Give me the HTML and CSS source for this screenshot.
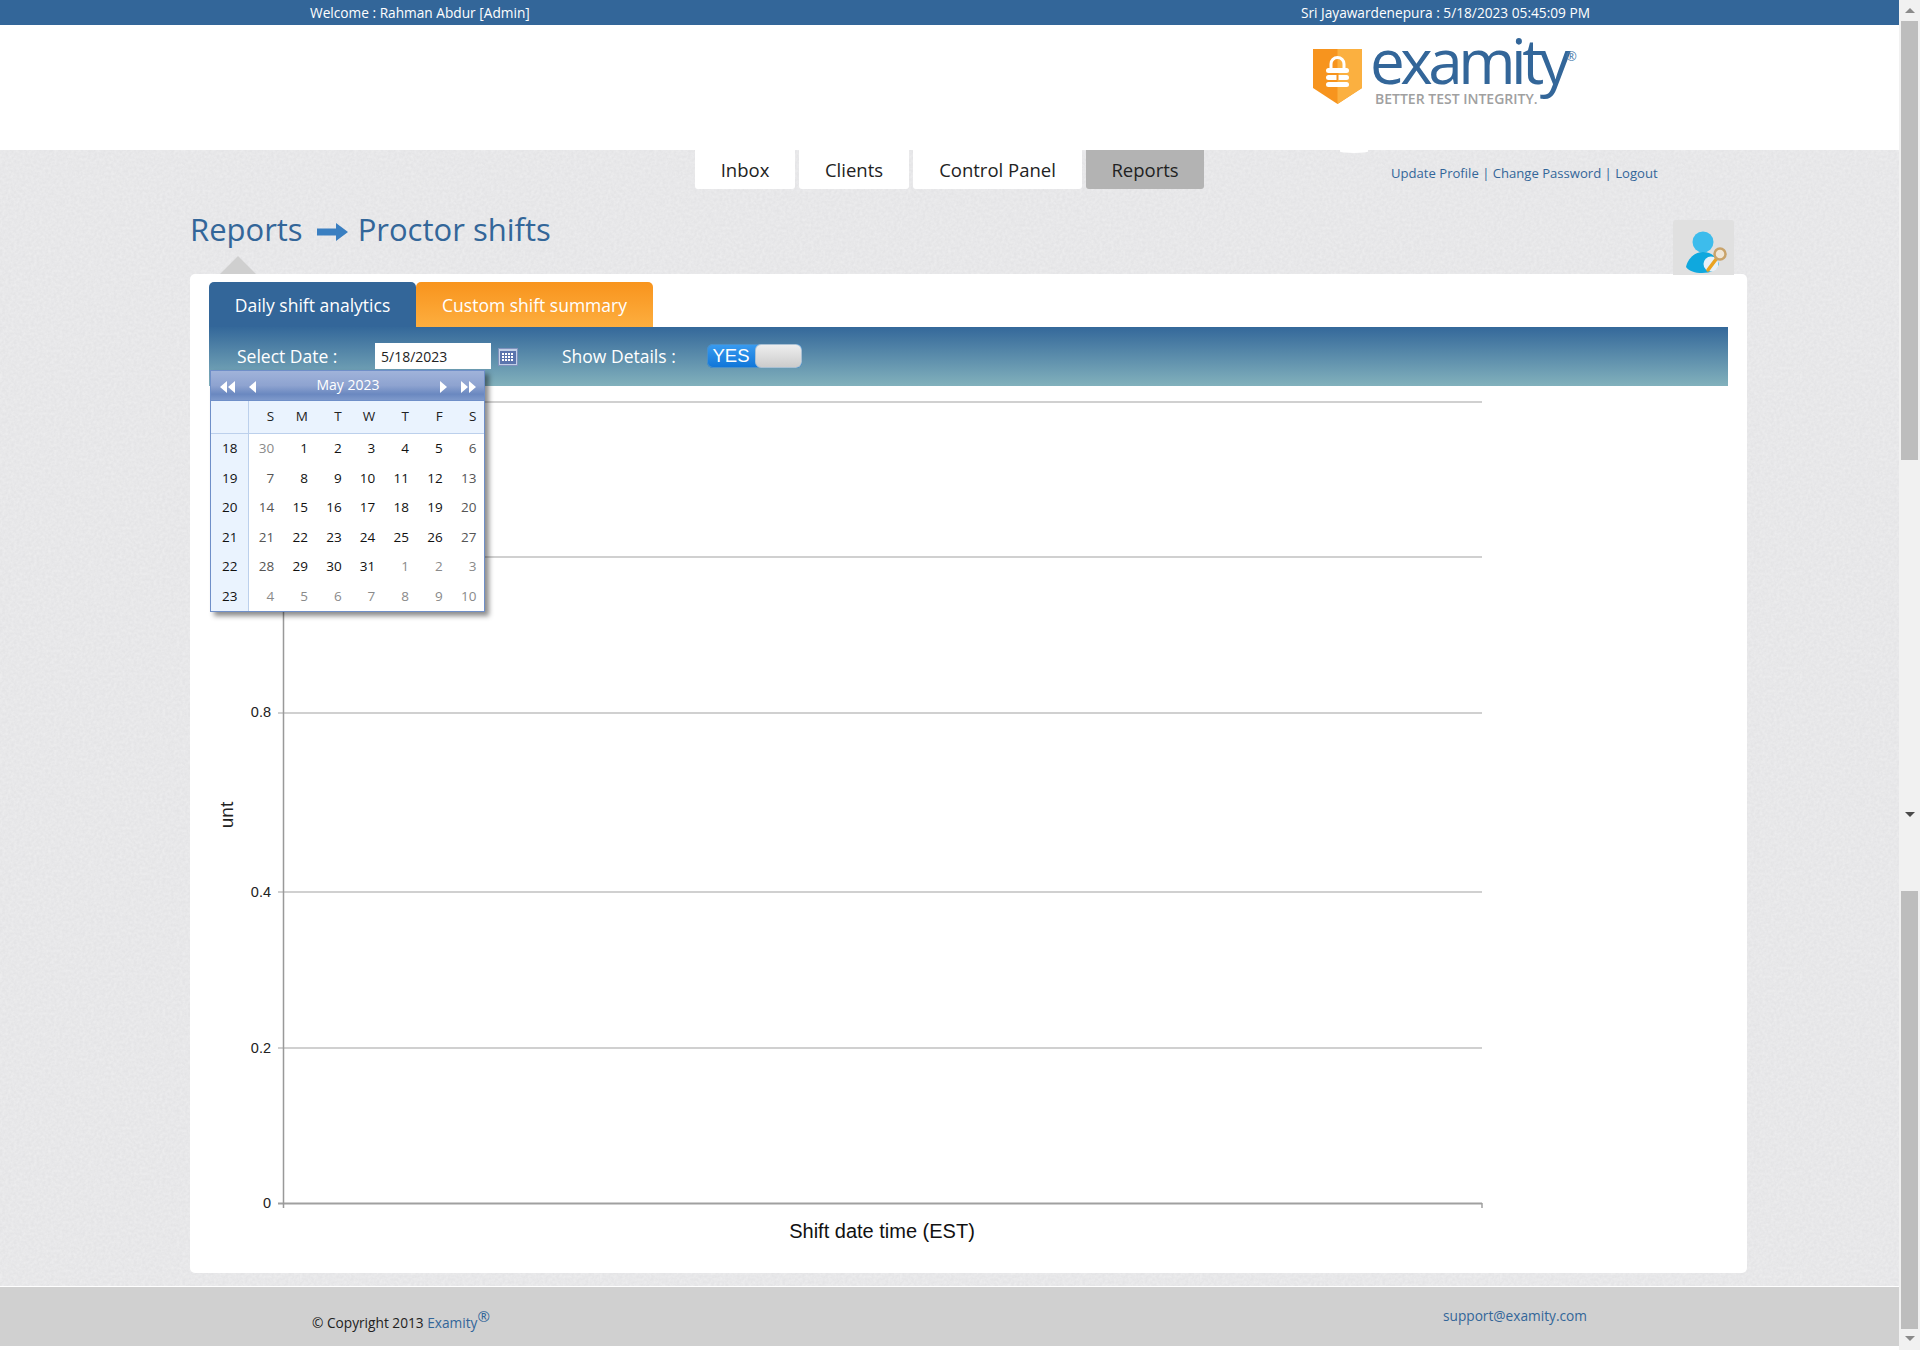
FILE: index.html
```html
<!DOCTYPE html>
<html lang="en">
<head>
  <meta charset="UTF-8" />
  <title>Examity - Proctor shifts</title>
  <link rel="stylesheet" href="styles.css">
</head>
<body>
<div class="window">
  <div class="page">
    <!-- Top strip -->
    <div class="topbar">
      <span>Welcome : Rahman Abdur [Admin]</span>
      <span>Sri Jayawardenepura : 5/18/2023 05:45:09 PM</span>
    </div>

    <!-- Logo -->
    <div class="header">
      <div class="logo">
        <svg class="shield" width="49" height="55" viewBox="0 0 49 55">
          <path d="M0 0H49V39L24.500 55L0 39Z" fill="#f7941e"/>
          <path d="M24.500 0H49V39L24.500 55Z" fill="#fbb040"/>
          <path d="M18 20V15a6.500 6.500 0 0 1 13 0V20" fill="none" stroke="#fff" stroke-width="3"/>
          <rect x="13" y="19" width="23" height="5" rx="2.500" fill="#fff"/>
          <rect x="13" y="26" width="23" height="5" rx="2.500" fill="#fff"/>
          <rect x="13" y="33" width="23" height="5" rx="2.500" fill="#fff"/>
          <rect x="23.500" y="24" width="2" height="7" fill="#f7941e"/>
        </svg>
        <div class="logo-text">
          <div class="logo-name">examity<span class="logo-reg">®</span></div>
          <div class="logo-tag">BETTER TEST INTEGRITY.</div>
        </div>
      </div>
    </div>

    <div class="content">
      <!-- Main nav -->
      <div class="navrow">
        <a class="navtab tab-inbox">Inbox</a>
        <a class="navtab tab-clients">Clients</a>
        <a class="navtab tab-control">Control Panel</a>
        <a class="navtab tab-reports active">Reports</a>
        <div class="bump"></div>
        <div class="userlinks">
          <a>Update Profile</a> | <a>Change Password</a> | <a>Logout</a>
        </div>
      </div>

      <!-- Title -->
      <div class="titlerow">
        <h1 class="title">Reports</h1>
        <svg class="title-arrow" width="31" height="18" viewBox="0 0 31 18">
          <path d="M0 5.500H19V0L31 9L19 18V12.500H0Z" fill="#3a7fc1"/>
        </svg>
        <h1 class="title">Proctor shifts</h1>
        <div class="pointer"></div>
        <div class="usericon">
          <svg width="61" height="55" viewBox="0 0 61 55">
            <circle cx="30" cy="22" r="10.500" fill="#3dbcec"/>
            <path d="M13 47C15 38 22 32 30 32C38 32 44 37 46 44C44 50 38 53 29 53C22 53 16 51 13 47Z" fill="#0fa8de"/>
            <circle cx="38" cy="44" r="7.500" fill="#e6f1f8"/>
            <path d="M35 50L44 38" stroke="#e9a422" stroke-width="3.500" stroke-linecap="round"/>
            <circle cx="47" cy="34" r="5.500" fill="#f0e6d6" stroke="#c9a36a" stroke-width="2.500"/>
          </svg>
        </div>
      </div>

      <!-- Card -->
      <div class="card">
        <div class="tabs">
          <div class="tab tab-daily">Daily shift analytics</div>
          <div class="tab tab-custom">Custom shift summary</div>
        </div>
        <div class="filterbar">
          <label class="flabel flabel-date">Select Date :</label>
          <input class="dateinput" type="text" value="5/18/2023">
          <svg class="calicon" width="20" height="18" viewBox="0 0 20 18">
            <rect x="0.500" y="0.500" width="19" height="17" fill="#c3cfe6" stroke="#7f92bd"/>
            <rect x="2" y="3" width="16" height="13" fill="#5b74ad"/>
            <g fill="#fff">
              <rect x="4" y="5" width="2" height="2"/><rect x="7" y="5" width="2" height="2"/><rect x="10" y="5" width="2" height="2"/><rect x="13" y="5" width="2" height="2"/>
              <rect x="4" y="8" width="2" height="2"/><rect x="7" y="8" width="2" height="2"/><rect x="10" y="8" width="2" height="2"/><rect x="13" y="8" width="2" height="2"/>
              <rect x="4" y="11" width="2" height="2"/><rect x="7" y="11" width="2" height="2"/><rect x="10" y="11" width="2" height="2"/><rect x="13" y="11" width="2" height="2"/>
            </g>
          </svg>
          <label class="flabel flabel-details">Show Details :</label>
          <div class="toggle">
            <span class="toggle-yes">YES</span>
            <span class="toggle-knob"></span>
          </div>
        </div>

        <!-- Date popup -->
        <div class="calendar">
          <div class="cal-head">
            <svg class="cal-nav" width="16" height="12" viewBox="0 0 16 12"><path d="M7 0V12L0 6ZM15 0V12L8 6Z" fill="#fff"/></svg>
            <svg class="cal-nav cal-prev" width="8" height="12" viewBox="0 0 8 12"><path d="M7 0V12L0 6Z" fill="#fff"/></svg>
            <span class="cal-month">May 2023</span>
            <svg class="cal-nav cal-next" width="8" height="12" viewBox="0 0 8 12"><path d="M1 0V12L8 6Z" fill="#fff"/></svg>
            <svg class="cal-nav" width="16" height="12" viewBox="0 0 16 12"><path d="M1 0V12L8 6ZM9 0V12L16 6Z" fill="#fff"/></svg>
          </div>
          <table class="cal-table">
            <thead>
              <tr><th class="wk"></th><th>S</th><th>M</th><th>T</th><th>W</th><th>T</th><th>F</th><th>S</th></tr>
            </thead>
            <tbody>
              <tr><td class="wk">18</td><td class="om">30</td><td>1</td><td>2</td><td>3</td><td>4</td><td>5</td><td class="we">6</td></tr>
              <tr><td class="wk">19</td><td class="we">7</td><td>8</td><td>9</td><td>10</td><td>11</td><td>12</td><td class="we">13</td></tr>
              <tr><td class="wk">20</td><td class="we">14</td><td>15</td><td>16</td><td>17</td><td>18</td><td>19</td><td class="we">20</td></tr>
              <tr><td class="wk">21</td><td class="we">21</td><td>22</td><td>23</td><td>24</td><td>25</td><td>26</td><td class="we">27</td></tr>
              <tr><td class="wk">22</td><td class="we">28</td><td>29</td><td>30</td><td>31</td><td class="om">1</td><td class="om">2</td><td class="om">3</td></tr>
              <tr><td class="wk">23</td><td class="om">4</td><td class="om">5</td><td class="om">6</td><td class="om">7</td><td class="om">8</td><td class="om">9</td><td class="om">10</td></tr>
            </tbody>
          </table>
        </div>

        <!-- Chart -->
        <svg class="chart" width="1557" height="887" viewBox="0 0 1557 887">
          <g stroke="#c0c0c0" stroke-width="1.500">
            <line x1="88" y1="16" x2="1292" y2="16"/>
            <line x1="88" y1="171" x2="1292" y2="171"/>
            <line x1="88" y1="327" x2="1292" y2="327"/>
            <line x1="88" y1="506" x2="1292" y2="506"/>
            <line x1="88" y1="662" x2="1292" y2="662"/>
          </g>
          <line x1="88" y1="817.500" x2="1292" y2="817.500" stroke="#a0a0a0" stroke-width="2"/>
          <line x1="1292" y1="817" x2="1292" y2="822" stroke="#a0a0a0" stroke-width="1.500"/>
          <line x1="93.500" y1="16" x2="93.500" y2="822" stroke="#999" stroke-width="1.500"/>
          <g class="ylabels" text-anchor="end">
            <text x="81" y="331">0.8</text>
            <text x="81" y="511">0.4</text>
            <text x="81" y="667">0.2</text>
            <text x="81" y="822">0</text>
          </g>
          <text class="ytitle" transform="translate(43,429) rotate(-90)" text-anchor="middle">unt</text>
          <text class="xtitle" x="692" y="852" text-anchor="middle">Shift date time (EST)</text>
        </svg>
      </div>
    </div>

    <div class="footer">
      <div class="copyright">© Copyright 2013 <a>Examity<sup>®</sup></a></div>
      <a class="support">support@examity.com</a>
    </div>
  </div>

  <!-- Window scrollbar -->
  <div class="scrollbar">
    <div class="sb-arrow sb-up"></div>
    <div class="sb-thumb sb-thumb-top"></div>
    <div class="sb-arrow sb-mid"></div>
    <div class="sb-thumb sb-thumb-low"></div>
    <div class="sb-arrow sb-down"></div>
  </div>
</div>
</body>
</html>
```

FILE: styles.css
```css
html, body { margin:0; padding:0; height:100%; }
body {
  font-family:"Open Sans", sans-serif;
  color:#222;
  background:#fff;
  overflow:hidden;
}
a { color:#336699; text-decoration:none; }
.window { display:flex; height:1350px; }
.page { width:1899px; display:flex; flex-direction:column; }

/* Top strip */
.topbar {
  height:25px;
  flex:none;
  display:flex;
  justify-content:space-between;
  align-items:center;
  padding:0 309px 0 310px;
  background:#336699;
  color:#fff;
  font-size:13.700px;
}

/* Logo */
.header { height:125px; flex:none; background:#fff; display:flex; }
.logo { display:flex; margin-left:1313px; padding-top:24px; align-items:flex-start; }
.shield { flex:none; }
.logo-text { margin-left:8px; margin-top:-19px; }
.logo-name {
  font-size:62px;
  font-weight:500;
  line-height:60px;
  color:#336699;
  letter-spacing:-4.500px;
  position:relative;
  white-space:nowrap;
}
.logo-reg {
  font-size:13px;
  font-weight:400;
  letter-spacing:0;
  position:absolute;
  left:196px;
  top:16px;
  line-height:20px;
  color:#4f80ad;
}
.logo-tag {
  font-size:14px;
  font-weight:600;
  color:#a0a0a0;
  line-height:14px;
  margin-left:5px;
  margin-top:2px;
  white-space:nowrap;
}

/* Main area */
.content {
  height:1136px;
  flex:none;
  background:#e4e4e6 url("data:image/svg+xml,%3Csvg xmlns='http://www.w3.org/2000/svg' width='300' height='300'%3E%3Cfilter id='n'%3E%3CfeTurbulence type='fractalNoise' baseFrequency='0.35' numOctaves='3' stitchTiles='stitch'/%3E%3CfeColorMatrix values='0 0 0 0 1 0 0 0 0 1 0 0 0 0 1 0.5 0 0 0 -0.12'/%3E%3C/filter%3E%3Crect width='300' height='300' filter='url(%23n)'/%3E%3C/svg%3E");
  display:flex;
  flex-direction:column;
}
.navrow { height:39px; flex:none; display:flex; padding-left:695px; position:relative; }
.navtab {
  height:39px;
  display:flex;
  align-items:center;
  justify-content:center;
  background:#fff;
  color:#222;
  font-size:18.500px;
  border-radius:0 0 3px 3px;
  margin-right:4px;
}
.tab-inbox { width:100px; }
.tab-clients { width:110px; }
.tab-control { width:169px; }
.tab-reports { width:118px; margin-right:0; }
.navtab.active { background:#b3b3b3; }
.bump {
  position:absolute;
  left:1340px;
  top:0;
  width:28px;
  height:3px;
  background:#fff;
  border-radius:0 0 50% 50%;
}
.userlinks {
  margin-left:187px;
  padding-top:14px;
  font-size:13.100px;
  color:#336699;
  white-space:nowrap;
}

/* Title */
.titlerow {
  height:85px;
  flex:none;
  padding-left:190px;
  display:flex;
  align-items:flex-start;
  position:relative;
}
.title {
  margin:18px 0 0;
  font-size:31px;
  font-weight:400;
  line-height:44px;
  color:#336699;
}
.title-arrow { margin:34px 10px 0 14px; flex:none; }
.pointer {
  position:absolute;
  left:220px;
  bottom:0;
  width:0;
  height:0;
  border-left:18px solid transparent;
  border-right:18px solid transparent;
  border-bottom:18px solid #cfcfcf;
}
.usericon {
  position:absolute;
  left:1673px;
  top:31px;
  width:61px;
  height:55px;
  background:#e0e0e0;
  border-radius:3px 3px 0 0;
  display:flex;
  z-index:2;
}

/* Card */
.card {
  width:1557px;
  height:999px;
  margin-left:190px;
  background:#fff;
  border-radius:5px;
  position:relative;
  display:flex;
  flex-direction:column;
}
.tabs { display:flex; padding:8px 0 0 19px; height:45px; flex:none; }
.tab {
  height:45px;
  display:flex;
  align-items:center;
  justify-content:center;
  color:#fff;
  font-size:17.500px;
  border-radius:5px 5px 0 0;
}
.tab-daily { width:207px; background:#336699; }
.tab-custom { width:237px; background:linear-gradient(#f8941d,#fdae3f); }

/* Filter band */
.filterbar {
  width:1519px;
  height:59px;
  flex:none;
  margin-left:19px;
  background:linear-gradient(#34689a,#82b1bc);
  display:flex;
  align-items:flex-start;
  color:#fff;
}
.flabel { font-size:17.500px; line-height:24px; margin-top:17px; }
.flabel-date { margin-left:28px; width:138px; }
.dateinput {
  width:110px;
  height:26px;
  margin-top:16px;
  box-sizing:content-box;
  padding:0 0 0 6px;
  border:0;
  font:14px "Open Sans", sans-serif;
  color:#222;
  background:#fff;
}
.calicon { margin:21px 0 0 7px; flex:none; }
.flabel-details { margin-left:44px; width:145px; }
.toggle {
  width:95px;
  height:24px;
  margin-top:17px;
  border-radius:6px;
  background:linear-gradient(#3a9cf0,#0f75d8);
  display:flex;
  overflow:hidden;
  box-shadow:inset 0 0 0 1px #4a8fc8;
}
.toggle-yes {
  width:48px;
  text-align:center;
  font:18.500px/24px "Liberation Sans", sans-serif;
  color:#fff;
}
.toggle-knob {
  flex:1;
  background:linear-gradient(#eee,#ccc);
  border-radius:6px;
  border:1px solid #a9c0d3;
}

/* Date popup */
.calendar {
  position:absolute;
  left:20px;
  top:96px;
  width:273px;
  height:240px;
  background:#fff;
  border:1px solid #6f8fc8;
  box-shadow:4px 4px 5px rgba(0,0,0,0.45);
  z-index:3;
}
.cal-head {
  height:30px;
  box-sizing:border-box;
  display:flex;
  align-items:center;
  color:#fff;
  background:linear-gradient(#a0b3da 0%,#8ea3d0 50%,#6a88c0 80%,#7e99cb 100%);
  border-bottom:1px solid #6f8fc8;
  padding:2px 8px 0 9px;
}
.cal-nav { flex:none; }
.cal-prev { margin-left:13px; }
.cal-next { margin-right:13px; }
.cal-month { flex:1; text-align:center; font-size:14px; line-height:20px; margin-top:-4px; }
.cal-table {
  border-collapse:collapse;
  table-layout:fixed;
  width:273px;
  font-size:13.500px;
}
.cal-table th {
  height:32px;
  box-sizing:border-box;
  font-weight:400;
  text-align:right;
  padding:0 7.500px 2px 0;
  background:#eaf3fe;
  border-bottom:1px solid #bcd0ec;
}
.cal-table td {
  height:29.500px;
  padding:0 7.500px 0 0;
  text-align:right;
  color:#111;
}
.cal-table .wk {
  width:37px;
  box-sizing:border-box;
  background:#eaf3fe;
  border-right:1px solid #bcd0ec;
  text-align:center;
  padding:0 0 0 1px;
  color:#111;
}
.cal-table td.we { color:#555; }
.cal-table td.om { color:#8a8a8a; }

/* Chart */
.chart { flex:1; display:block; }
.ylabels text { font:14.500px "Liberation Sans", sans-serif; fill:#222; }
.ytitle { font:19px "Liberation Sans", sans-serif; fill:#222; }
.xtitle { font:20px "Liberation Sans", sans-serif; fill:#111; }

/* Footer */
.footer {
  flex:none;
  height:59px;
  margin-top:1px;
  background:#d0d0d0;
  display:flex;
  justify-content:space-between;
  font-size:13.700px;
  padding:0 312px;
}
.copyright { padding-top:26px; color:#222; line-height:20px; }
.copyright sup { font-size:15px; line-height:0; }
.support { padding-top:19px; line-height:20px; }

/* Window scrollbar */
.scrollbar {
  width:21px;
  flex:none;
  background:#f1f1f1;
  display:flex;
  flex-direction:column;
  align-items:center;
}
.sb-thumb { width:17px; background:#bdbdbd; flex:none; }
.sb-thumb-top { height:439px; }
.sb-thumb-low { height:438px; }
.sb-arrow { width:0; height:0; flex:none; border-left:5px solid transparent; border-right:5px solid transparent; }
.sb-up { border-bottom:5px solid #8a8a8a; margin:8px 0 8px; }
.sb-mid { border-top:5px solid #4a4a4a; margin:352px 0 74px; }
.sb-down { border-top:5px solid #8a8a8a; margin-top:7px; }
```
